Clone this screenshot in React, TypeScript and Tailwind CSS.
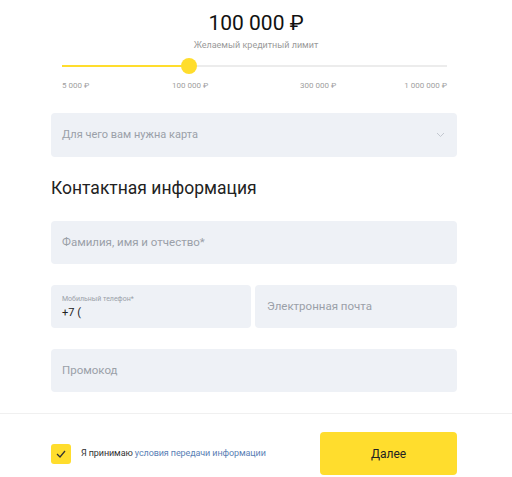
import * as React from "react";

const TICKS = ["5 000 ₽", "100 000 ₽", "300 000 ₽", "1 000 000 ₽"];

function Field({ placeholder, size }: { placeholder: string; size: string }) {
  return (
    <div className="h-[43px] rounded-[4px] bg-[#eef1f6] px-[11px] flex items-center">
      <span className={`${size} text-[#9aa0a8] pt-[1px]`}>{placeholder}</span>
    </div>
  );
}

export default function App() {
  return (
    <div
      className="w-[512px] h-[477px] bg-white overflow-hidden text-[#333]"
      style={{ fontFamily: "Roboto, 'Liberation Sans', sans-serif" }}
    >
      {/* credit limit */}
      <div className="pt-[10px] flex flex-col items-center">
        <div className="text-[21px] leading-[26px] text-[#111]">100 000 ₽</div>
        <div className="mt-[3px] text-[9px] leading-[12px] text-[#9a9a9a]">
          Желаемый кредитный лимит
        </div>
      </div>

      <div className="mx-[62px] w-[385px] mt-[7px]">
        <div className="relative h-4 flex items-center">
          <div className="w-full h-[2px] bg-[#ececec]" />
          <div className="absolute left-0 top-[7px] h-[2px] w-[127px] bg-[#ffdd2d]" />
          <div className="absolute left-[119px] top-0 w-4 h-4 rounded-full bg-[#ffdd2d]" />
        </div>
        <div className="mt-[7px] grid grid-cols-[110px_128px_1fr_auto] text-[8px] leading-[10px] text-[#a0a0a0]">
          {TICKS.map((t) => (
            <span key={t}>{t}</span>
          ))}
        </div>
      </div>

      {/* form */}
      <div className="mx-[51px] w-[406px] mt-[22px]">
        <div className="h-[44px] rounded-[4px] bg-[#eef1f6] pl-[11px] pr-[12px] flex items-center justify-between">
          <span className="text-[11px] text-[#9aa0a8]">Для чего вам нужна карта</span>
          <svg width="9" height="6" viewBox="0 0 9 6" fill="none">
            <path d="M1 1l3.5 3.5L8 1" stroke="#c3c8d0" strokeWidth="1" />
          </svg>
        </div>

        <h2 className="mt-[19px] text-[17.5px] leading-[24px] text-[#222]">
          Контактная информация
        </h2>

        <div className="mt-[21px] flex flex-col gap-[21px]">
          <Field placeholder="Фамилия, имя и отчество*" size="text-[11.5px]" />
          <div className="flex gap-[4px]">
            <div className="flex-1 h-[43px] rounded-[4px] bg-[#eef1f6] px-[11px] flex flex-col justify-center">
              <span className="text-[7px] leading-[9px] text-[#9aa0a8]">Мобильный телефон*</span>
              <span className="mt-[2px] text-[11px] leading-[13px] text-[#222]">+7 (</span>
            </div>
            <div className="flex-1 h-[43px] rounded-[4px] bg-[#eef1f6] px-[12px] flex items-center">
              <span className="text-[11.5px] pt-[1px] text-[#9aa0a8]">Электронная почта</span>
            </div>
          </div>
          <Field placeholder="Промокод" size="text-[11.5px]" />
        </div>
      </div>

      <div className="mt-[21px] h-px bg-[#f0f0f0]" />

      <div className="mx-[51px] w-[406px] mt-[18px] flex items-center justify-between">
        <div className="flex items-center gap-[10px]">
          <div className="w-5 h-5 rounded-[3px] bg-[#ffdd2d] flex items-center justify-center">
            <svg width="10" height="8" viewBox="0 0 10 8" fill="none">
              <path d="M1 4l3 3 5-6" stroke="#333" strokeWidth="1.3" />
            </svg>
          </div>
          <span className="text-[9px] tracking-[-0.1px] text-[#333]">
            Я принимаю <span className="text-[#5b7fb5]">условия передачи информации</span>
          </span>
        </div>
        <button className="w-[137px] h-[43px] rounded-[4px] bg-[#ffdd2d] text-[12px] text-[#222]">
          Далее
        </button>
      </div>
    </div>
  );
}
